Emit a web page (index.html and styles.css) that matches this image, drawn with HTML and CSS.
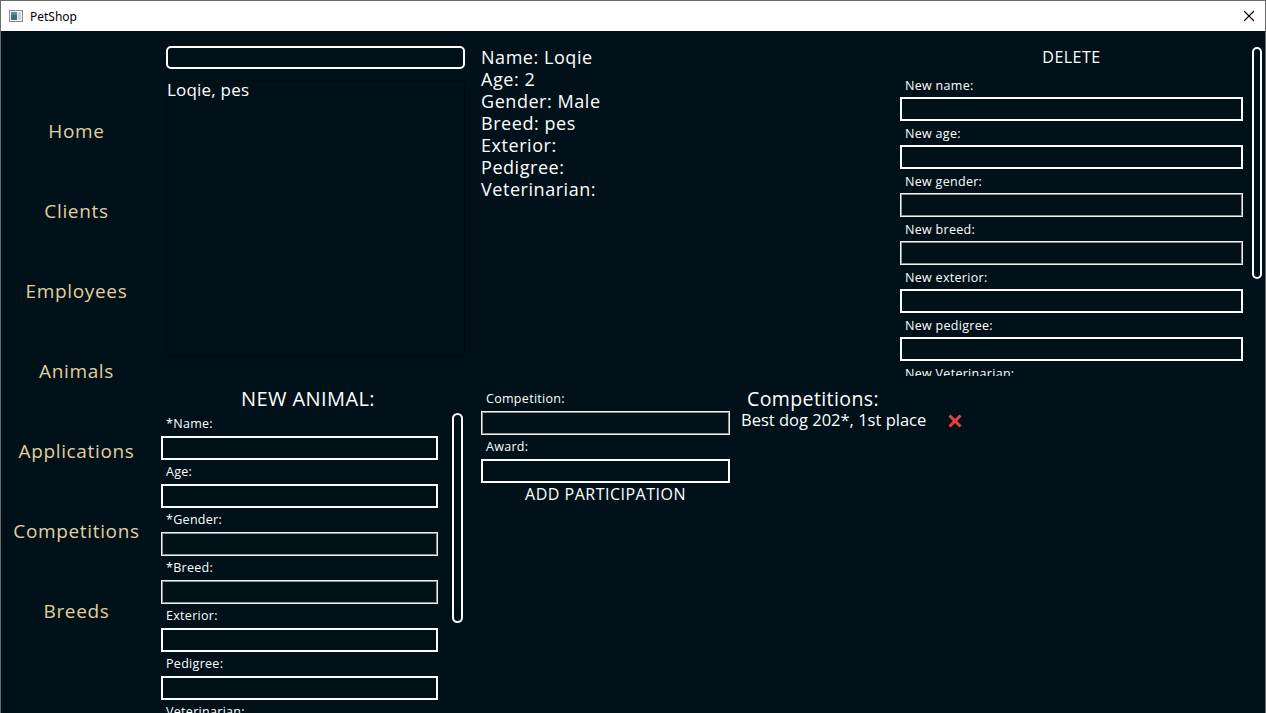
FILE: index.html
```html
<!DOCTYPE html>
<html lang="en">
<head>
<meta charset="utf-8">
<title>PetShop</title>
<link rel="stylesheet" href="styles.css">
</head>
<body>
<div class="window">
  <div class="titlebar">
    <svg class="app-icon" width="14" height="12" viewBox="0 0 14 12">
      <rect x="0.5" y="0.5" width="13" height="11" fill="#f2f2f2" stroke="#8a8a8a"/>
      <rect x="2" y="2" width="6" height="8" fill="#3c6e78"/>
      <rect x="2" y="2" width="6" height="3" fill="#5a8c94"/>
      <rect x="9" y="2" width="3" height="8" fill="#c8d4d6"/>
    </svg>
    <span class="title">PetShop</span>
    <svg class="close" width="12" height="12" viewBox="0 0 12 12">
      <path d="M1 1 L11 11 M11 1 L1 11" stroke="#000" stroke-width="1.1" fill="none"/>
    </svg>
  </div>
  <div class="app">
    <nav class="nav">
      <div class="nav-item">Home</div>
      <div class="nav-item">Clients</div>
      <div class="nav-item">Employees</div>
      <div class="nav-item">Animals</div>
      <div class="nav-item">Applications</div>
      <div class="nav-item">Competitions</div>
      <div class="nav-item">Breeds</div>
    </nav>
    <main class="main">
      <section class="top-row">
        <div class="list-col">
          <div class="search"></div>
          <div class="list">
            <div class="list-item">Loqie, pes</div>
          </div>
        </div>
        <div class="details">
          <div>Name: Loqie</div>
          <div>Age: 2</div>
          <div>Gender: Male</div>
          <div>Breed: pes</div>
          <div>Exterior:</div>
          <div>Pedigree:</div>
          <div>Veterinarian:</div>
        </div>
        <div class="edit-panel">
          <div class="edit-fields">
            <div class="button-text">DELETE</div>
            <div class="label">New name:</div>
            <div class="input"></div>
            <div class="label">New age:</div>
            <div class="input"></div>
            <div class="label">New gender:</div>
            <div class="input combo"></div>
            <div class="label">New breed:</div>
            <div class="input combo"></div>
            <div class="label">New exterior:</div>
            <div class="input"></div>
            <div class="label">New pedigree:</div>
            <div class="input"></div>
            <div class="label">New Veterinarian:</div>
            <div class="input"></div>
          </div>
          <div class="scrollbar scrollbar-top"></div>
        </div>
      </section>
      <section class="bottom-row">
        <div class="new-animal">
          <div class="heading centered">NEW ANIMAL:</div>
          <div class="new-animal-body">
            <div class="new-fields">
              <div class="label">*Name:</div>
              <div class="input"></div>
              <div class="label">Age:</div>
              <div class="input"></div>
              <div class="label">*Gender:</div>
              <div class="input combo"></div>
              <div class="label">*Breed:</div>
              <div class="input combo"></div>
              <div class="label">Exterior:</div>
              <div class="input"></div>
              <div class="label">Pedigree:</div>
              <div class="input"></div>
              <div class="label">Veterinarian:</div>
              <div class="input"></div>
            </div>
            <div class="scrollbar scrollbar-bottom"></div>
          </div>
        </div>
        <div class="participation">
          <div class="label">Competition:</div>
          <div class="input combo"></div>
          <div class="label">Award:</div>
          <div class="input"></div>
          <div class="button-text">ADD PARTICIPATION</div>
        </div>
        <div class="competitions">
          <div class="heading comp-heading">Competitions:</div>
          <div class="comp-item">
            <span>Best dog 202*, 1st place</span>
            <svg class="remove" width="16" height="16" viewBox="0 0 16 16">
              <path d="M2.5 2.5 L13.5 13.5 M13.5 2.5 L2.5 13.5" stroke="#e8413c" stroke-width="3" fill="none"/>
            </svg>
          </div>
        </div>
      </section>
    </main>
  </div>
</div>
</body>
</html>
```

FILE: styles.css
```css
* { box-sizing: border-box; }
html, body {
  margin: 0;
  padding: 0;
  width: 1266px;
  height: 713px;
  overflow: hidden;
  background: #00111a;
}
.window {
  width: 1266px;
  height: 713px;
  border: 1px solid #6b6b6b;
  border-bottom: none;
  display: flex;
  flex-direction: column;
  font-family: "Open Sans", "Noto Sans", sans-serif;
  color: #ffffff;
}
.titlebar {
  height: 30px;
  flex: none;
  background: #ffffff;
  display: flex;
  align-items: center;
  padding-left: 8px;
  font-family: "Noto Sans", "Liberation Sans", sans-serif;
  font-size: 12px;
  color: #000;
}
.app-icon { margin-right: 7px; }
.title { flex: 1; }
.close { margin-right: 10px; }

.app {
  flex: 1;
  display: flex;
  min-height: 0;
  background: #00111a;
}
.nav {
  width: 151px;
  flex: none;
  padding-top: 60px;
  display: flex;
  flex-direction: column;
}
.nav-item {
  height: 80px;
  display: flex;
  align-items: center;
  justify-content: center;
  font-size: 19px;
  letter-spacing: 0.65px;
  color: #e3cf9b;
}
.main {
  flex: 1;
  display: flex;
  flex-direction: column;
  min-width: 0;
}
.top-row {
  height: 345px;
  flex: none;
  display: flex;
  padding: 15px 3px 0 14px;
  overflow: hidden;
}
.list-col {
  width: 299px;
  flex: none;
  margin-right: 16px;
  display: flex;
  flex-direction: column;
}
.search {
  height: 23px;
  border: 2px solid #ffffff;
  border-radius: 5px;
}
.list {
  margin-top: 11px;
  height: 276px;
  border: 1px dotted #01070b;
  border-radius: 2px;
}
.list-item {
  font-size: 17px;
  line-height: 18px;
  letter-spacing: 0.2px;
}
.details {
  flex: 1;
  font-size: 18px;
  line-height: 22px;
  letter-spacing: 0.55px;
}
.edit-panel {
  width: 362px;
  flex: none;
  display: flex;
  align-items: flex-start;
}
.edit-fields {
  width: 343px;
  flex: none;
  margin-right: 9px;
}
.button-text {
  font-size: 16px;
  line-height: 22px;
  text-align: center;
  letter-spacing: 0.5px;
}
.edit-fields .button-text { margin-bottom: 5px; }
.label {
  height: 24px;
  line-height: 24px;
  font-size: 12.5px;
  padding-left: 5px;
  letter-spacing: 0.3px;
}
.edit-fields .label { line-height: 26px; }
.input {
  height: 24px;
  border: 2px solid #ffffff;
}
.input.combo {
  border: 1px solid #f2f2f2;
  box-shadow: inset 0 0 0 1px #8f8f8f;
}
.scrollbar {
  width: 11px;
  border: 2px solid #ffffff;
  border-radius: 6px;
}
.scrollbar-top {
  height: 232px;
  margin-top: 1px;
}

.bottom-row {
  flex: 1;
  display: flex;
  padding-left: 9px;
  min-height: 0;
  overflow: hidden;
}
.new-animal {
  width: 302px;
  flex: none;
  padding-top: 12px;
  margin-right: 18px;
}
.heading {
  font-size: 20px;
  line-height: 22px;
  letter-spacing: 0.4px;
}
.centered {
  text-align: center;
  padding-right: 8px;
}
.new-animal-body {
  display: flex;
  align-items: flex-start;
  margin-top: 2px;
}
.new-fields {
  width: 277px;
  flex: none;
  margin-right: 14px;
}
.scrollbar-bottom {
  height: 210px;
  margin-top: 1px;
}
.participation {
  width: 249px;
  flex: none;
  padding-top: 11px;
  margin-right: 11px;
}
.competitions {
  flex: 1;
  padding-top: 13px;
}
.comp-heading {
  padding-left: 6px;
  font-size: 19.5px;
  line-height: 20px;
}
.comp-item {
  display: flex;
  align-items: center;
  font-size: 16.5px;
  line-height: 20px;
  margin-top: 1px;
  letter-spacing: 0;
}
.remove { margin-left: 21px; margin-top: 2px; }
```
